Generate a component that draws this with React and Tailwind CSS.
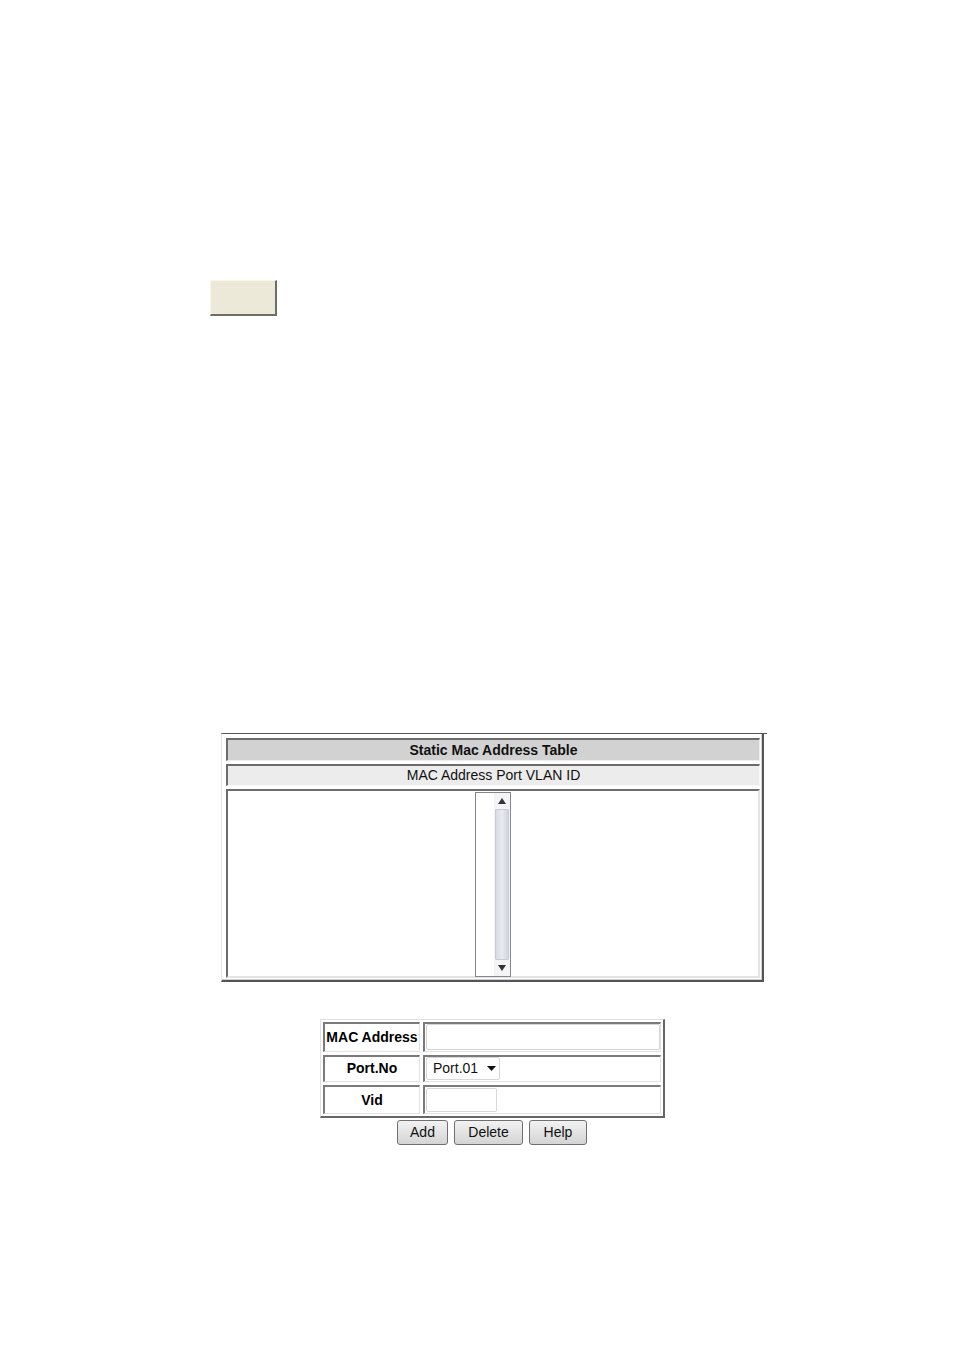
export default function App() {
  const labelCell =
    "w-[97px] flex items-center justify-center border-t-2 border-l-2 border-t-[#7a7a7a] border-l-[#7a7a7a] border-b border-r border-b-[#e2e2e2] border-r-[#e2e2e2] font-bold text-[14px] text-black";
  const valueCell =
    "flex-1 flex items-center border-t-2 border-l-2 border-t-[#7a7a7a] border-l-[#7a7a7a] border-b border-r border-b-[#e2e2e2] border-r-[#e2e2e2] pl-[1px]";
  const btn =
    "h-[25px] flex items-center justify-center rounded-[3px] border border-[#707070] bg-gradient-to-b from-[#f2f2f2] to-[#d4d4d4] text-[14px] text-[#111]";

  return (
    <div
      className="w-[954px] min-h-[1351px] bg-white"
      style={{ fontFamily: '"Liberation Sans", Arial, sans-serif' }}
    >
      {/* top blank button */}
      <div className="pt-[280px] pl-[210px]">
        <div className="w-[67px] h-[36px] bg-[#ece9d8] border-t border-l border-t-[#f8f7f0] border-l-[#f8f7f0] border-r-2 border-b-2 border-r-[#6f6e64] border-b-[#6f6e64]" />
      </div>

      <div className="ml-[221px] w-[547px] mt-[417px] flex flex-col">
        {/* static mac table */}
        <div className="w-[543px] h-[249px] border-t border-t-[#555] border-l border-l-[#e4e4e4] border-r-2 border-b-2 border-r-[#555] border-b-[#555] relative">
          <div className="absolute -top-[1px] -right-[5px] w-[5px] h-[1px] bg-[#555]" />
          <div className="h-full border-r border-b border-r-[#cfcfcf] border-b-[#cfcfcf] pl-[4px] pr-[1px] pt-[4px] flex flex-col gap-[3px]">
            <div className="h-[23px] bg-[#d2d2d2] border-t-2 border-l-2 border-t-[#6c6c6c] border-l-[#6c6c6c] border-b border-r border-b-[#eeeeee] border-r-[#eeeeee] flex items-center justify-center font-bold text-[14px] text-[#111]">
              Static Mac Address Table
            </div>
            <div className="h-[22px] bg-[#ececec] border-t-2 border-l-2 border-t-[#6c6c6c] border-l-[#6c6c6c] border-b border-r border-b-[#f8f8f8] border-r-[#f8f8f8] flex items-center justify-center text-[14px] text-[#111]">
              MAC Address Port VLAN ID
            </div>
            <div className="h-[189px] bg-white border-t-2 border-l-2 border-t-[#6c6c6c] border-l-[#6c6c6c] border-b-2 border-r-2 border-b-[#e4e4e4] border-r-[#e4e4e4] flex justify-center pt-[1px]">
              {/* listbox */}
              <div className="w-[36px] h-[185px] border border-[#828790] bg-white flex">
                <div className="flex-1" />
                <div className="w-[16px] flex flex-col bg-[#f4f4f6]">
                  <div className="h-[16px] flex items-center justify-center">
                    <svg width="8" height="6" viewBox="0 0 8 6">
                      <path d="M4 0L8 6H0Z" fill="#333" />
                    </svg>
                  </div>
                  <div className="flex-1 mx-[1px] bg-gradient-to-r from-[#d8dbe3] via-[#e8eaf0] to-[#d2d5de] border border-[#c9ccd4] rounded-[1px]" />
                  <div className="h-[16px] flex items-center justify-center">
                    <svg width="8" height="6" viewBox="0 0 8 6">
                      <path d="M0 0H8L4 6Z" fill="#333" />
                    </svg>
                  </div>
                </div>
              </div>
            </div>
          </div>
        </div>

        {/* form */}
        <div className="ml-[99px] mt-[37px] w-[345px] h-[99px] border-t border-l border-t-[#e0e0e0] border-l-[#e0e0e0] border-r-2 border-b-2 border-r-[#666] border-b-[#666] p-[2px] flex flex-col gap-[3px]">
          <div className="h-[30px] flex gap-[3px]">
            <div className={labelCell}>MAC Address</div>
            <div className={valueCell}>
              <div className="w-[234px] h-[26px] border border-[#d4d4d4] rounded-[2px] bg-white" />
            </div>
          </div>
          <div className="h-[28px] flex gap-[3px]">
            <div className={labelCell}>Port.No</div>
            <div className={valueCell}>
              <div className="w-[74px] h-[23px] border border-[#d8d8d8] rounded-[2px] bg-white flex items-center pl-[6px] text-[14px] text-[#111]">
                <span>Port.01</span>
                <svg className="ml-[9px]" width="9" height="5" viewBox="0 0 9 5">
                  <path d="M0 0H9L4.5 5Z" fill="#111" />
                </svg>
              </div>
            </div>
          </div>
          <div className="h-[29px] flex gap-[3px]">
            <div className={labelCell}>Vid</div>
            <div className={valueCell}>
              <div className="w-[71px] h-[24px] border border-[#d8d8d8] rounded-[2px] bg-white" />
            </div>
          </div>
        </div>

        {/* buttons */}
        <div className="ml-[176px] mt-[2px] flex gap-[6px]">
          <button className={`${btn} w-[51px]`}>Add</button>
          <button className={`${btn} w-[69px]`}>Delete</button>
          <button className={`${btn} w-[58px]`}>Help</button>
        </div>
      </div>
    </div>
  );
}
